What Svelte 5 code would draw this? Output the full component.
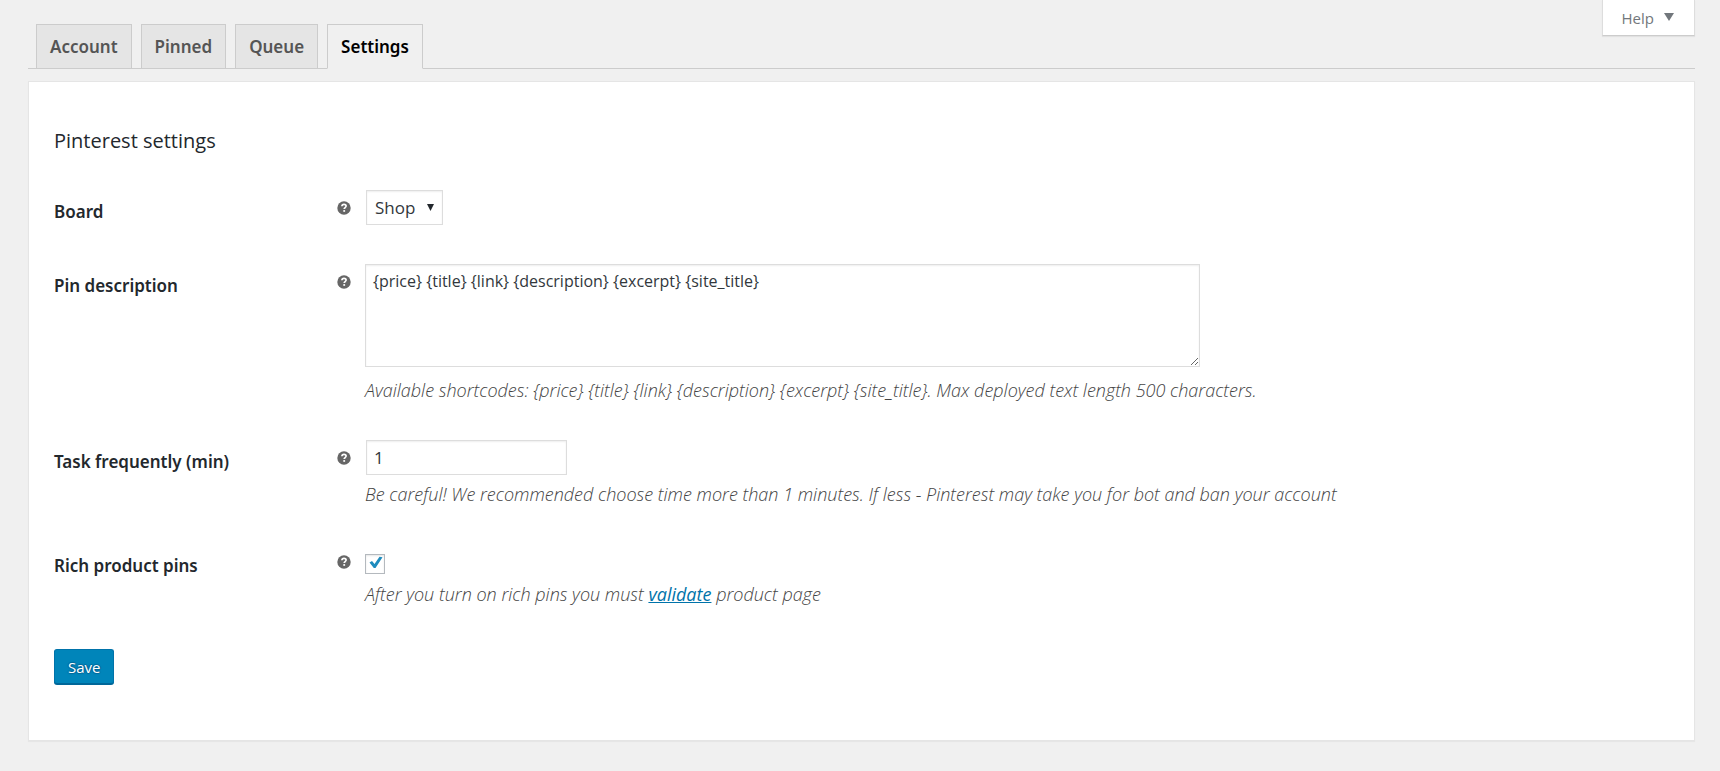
<script>
  const tabs = ['Account', 'Pinned', 'Queue', 'Settings'];
  let active = $state('Settings');
  let board = $state('Shop');
  let pinText = $state('{price} {title} {link} {description} {excerpt} {site_title}');
  let frequency = $state('1');
  let rich = $state(true);
</script>

{#snippet tip()}
  <svg class="tip" viewBox="0 0 14 14" aria-hidden="true">
    <circle cx="7" cy="7" r="6.7" fill="#666" />
    <path d="M4.9 5.2C5 3.9 5.9 3.4 7 3.4c1.200 0 2.100.6 2.100 1.700 0 1.500-1.900 1.500-1.900 3" fill="none" stroke="#fff" stroke-width="1.700" />
    <rect x="6.300" y="9.100" width="1.800" height="1.700" fill="#fff" />
  </svg>
{/snippet}

<div class="page">
  <header>
    <nav>
      {#each tabs as tab}
        <a href="#{tab.toLowerCase()}" class:active={active === tab} onclick={() => (active = tab)}>{tab}</a>
      {/each}
    </nav>
    <button class="help" type="button">
      Help
      <svg viewBox="0 0 10 8" aria-hidden="true"><path d="M0 0h10L5 8z" fill="#72777c" /></svg>
    </button>
  </header>

  <main>
    <form onsubmit={(e) => e.preventDefault()}>
      <h2>Pinterest settings</h2>

      <div class="row">
        <label class="name" for="board">Board</label>
        {@render tip()}
        <div class="field">
          <span class="select">
            <select id="board" bind:value={board}><option>Shop</option></select>
            <svg viewBox="0 0 7 7" aria-hidden="true"><path d="M0 0h7L3.500 7z" fill="#23282d" /></svg>
          </span>
        </div>
      </div>

      <div class="row">
        <label class="name" for="pin">Pin description</label>
        {@render tip()}
        <div class="field">
          <textarea id="pin" bind:value={pinText} spellcheck="false"></textarea>
          <p class="below-area">Available shortcodes: {'{price} {title} {link} {description} {excerpt} {site_title}'}. Max deployed text length 500 characters.</p>
        </div>
      </div>

      <div class="row">
        <label class="name" for="freq">Task frequently (min)</label>
        {@render tip()}
        <div class="field">
          <input id="freq" class="text" type="text" bind:value={frequency} />
          <p>Be careful! We recommended choose time more than 1 minutes. If less - Pinterest may take you for bot and ban your account</p>
        </div>
      </div>

      <div class="row">
        <label class="name" for="rich">Rich product pins</label>
        {@render tip()}
        <div class="field">
          <span class="check">
            <input id="rich" type="checkbox" bind:checked={rich} />
            {#if rich}
              <svg viewBox="0 0 14 13" aria-hidden="true"><path d="M.500 6.500 3 5l2.500 3L10.500.800 13.500 1.200 6.500 12H4.800z" fill="#1e8cbe" /></svg>
            {/if}
          </span>
          <p>After you turn on rich pins you must <a href="#validate">validate</a> product page</p>
        </div>
      </div>

      <button class="save" type="submit">Save</button>
    </form>
  </main>
</div>

<style>
  :global(body) {
    margin: 0;
    background: #f0f0f0;
  }
  .page,
  button,
  input,
  select,
  textarea {
    font-family: 'Open Sans', 'Noto Sans', sans-serif;
  }
  .page {
    padding: 0 25px 30px 28px;
    color: #23282d;
  }
  .page * {
    box-sizing: border-box;
  }
  nav,
  .name {
    font-family: 'Noto Sans', 'Open Sans', sans-serif;
  }
  header {
    display: flex;
    justify-content: space-between;
    align-items: flex-start;
    border-bottom: 1px solid #ccc;
  }
  nav {
    display: flex;
    gap: 9px;
    padding: 24px 0 0 8px;
    margin-bottom: -1px;
  }
  nav a {
    padding: 10px 13px 9px;
    border: 1px solid #ccc;
    background: #e5e5e5;
    color: #555;
    font-size: 17px;
    font-weight: 600;
    line-height: 24px;
    text-decoration: none;
  }
  nav a.active {
    background: #f0f0f0;
    border-bottom-color: #f0f0f0;
    color: #000;
  }
  .help {
    display: flex;
    align-items: center;
    gap: 10px;
    height: 36px;
    padding: 0 20px 0 19px;
    border: 1px solid #ddd;
    border-top: 0;
    border-bottom-color: #ccc;
    background: #fff;
    box-shadow: 0 1px 1px rgba(0, 0, 0, 0.06);
    color: #72777c;
    font-size: 15px;
  }
  .help svg {
    width: 10px;
    height: 8px;
    margin-bottom: 2px;
  }
  main {
    margin-top: 12px;
    padding: 44px 25px 56px;
    border: 1px solid #e5e5e5;
    background: #fff;
    box-shadow: 0 1px 1px rgba(0, 0, 0, 0.04);
  }
  form {
    display: flex;
    flex-direction: column;
    gap: 39px;
  }
  h2 {
    margin: 0 0 -4px;
    font-size: 20px;
    font-weight: 400;
    line-height: 29px;
  }
  .row {
    display: grid;
    grid-template-columns: 283px 28px 1fr;
    align-items: start;
  }
  .name {
    padding-top: 11px;
    font-size: 17px;
    font-weight: 600;
    line-height: 22px;
  }
  .tip {
    width: 14px;
    height: 14px;
    margin-top: 11px;
  }
  .field {
    display: flex;
    flex-direction: column;
    align-items: flex-start;
  }
  select,
  .text,
  textarea {
    border: 1px solid #ddd;
    border-radius: 0;
    background: #fff;
    box-shadow: inset 0 1px 2px rgba(0, 0, 0, 0.07);
    color: #32373c;
    outline: 0;
  }
  .select {
    position: relative;
    margin-left: 1px;
  }
  .select svg {
    position: absolute;
    top: 14px;
    right: 9px;
    width: 7px;
    height: 7px;
    pointer-events: none;
  }
  select {
    display: block;
    appearance: none;
    height: 35px;
    padding: 0 26px 0 8px;
    font-size: 17px;
  }
  .text {
    width: 201px;
    height: 35px;
    margin-left: 1px;
    padding: 2px 7px;
    font-size: 17px;
  }
  textarea {
    display: block;
    width: 64%;
    height: 103px;
    padding: 5px 7px;
    font-size: 16px;
    line-height: 22px;
    resize: both;
  }
  p {
    margin: 8px 0 0;
    color: #444;
    font-size: 18px;
    font-style: italic;
    font-weight: 300;
    line-height: 22px;
  }
  .below-area {
    margin-top: 12px;
  }
  p a {
    color: #0073aa;
    font-weight: 400;
  }
  .check {
    position: relative;
    margin: 10px 0 1px;
  }
  .check input {
    display: block;
    appearance: none;
    width: 20px;
    height: 20px;
    margin: 0;
    border: 1px solid #b4b9be;
    background: #fff;
    box-shadow: inset 0 1px 2px rgba(0, 0, 0, 0.1);
  }
  .check svg {
    position: absolute;
    top: 2px;
    left: 4px;
    width: 14px;
    height: 13px;
    pointer-events: none;
  }
  .save {
    align-self: flex-start;
    height: 35px;
    margin-top: 5px;
    padding: 0 13px;
    border: 1px solid #0073aa;
    border-bottom-color: #006799;
    border-radius: 3px;
    background: #0085ba;
    box-shadow: 0 1px 0 #006799;
    color: #fff;
    font-size: 15px;
    text-shadow: 0 -1px 1px #006799, 1px 0 1px #006799, 0 1px 1px #006799, -1px 0 1px #006799;
  }
</style>
